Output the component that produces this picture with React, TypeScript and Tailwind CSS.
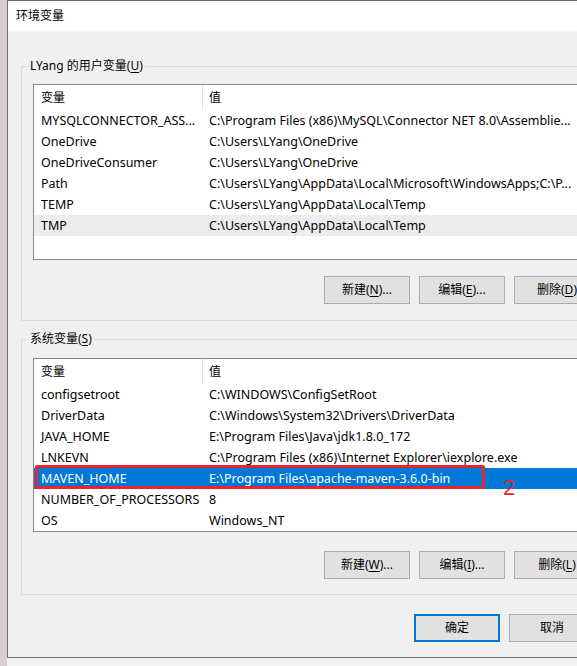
import type { ReactNode } from "react";

const userVars: [string, string][] = [
  ["MYSQLCONNECTOR_ASS...", "C:\\Program Files (x86)\\MySQL\\Connector NET 8.0\\Assemblie..."],
  ["OneDrive", "C:\\Users\\LYang\\OneDrive"],
  ["OneDriveConsumer", "C:\\Users\\LYang\\OneDrive"],
  ["Path", "C:\\Users\\LYang\\AppData\\Local\\Microsoft\\WindowsApps;C:\\P..."],
  ["TEMP", "C:\\Users\\LYang\\AppData\\Local\\Temp"],
  ["TMP", "C:\\Users\\LYang\\AppData\\Local\\Temp"],
];

const systemVars: [string, string][] = [
  ["configsetroot", "C:\\WINDOWS\\ConfigSetRoot"],
  ["DriverData", "C:\\Windows\\System32\\Drivers\\DriverData"],
  ["JAVA_HOME", "E:\\Program Files\\Java\\jdk1.8.0_172"],
  ["LNKEVN", "C:\\Program Files (x86)\\Internet Explorer\\iexplore.exe"],
  ["MAVEN_HOME", "E:\\Program Files\\apache-maven-3.6.0-bin"],
  ["NUMBER_OF_PROCESSORS", "8"],
  ["OS", "Windows_NT"],
];

const Mn = ({ children }: { children: ReactNode }) => (
  <span className="underline underline-offset-[2px]">{children}</span>
);

const WinButton = ({ children, primary }: { children: ReactNode; primary?: boolean }) => (
  <button
    className={
      primary
        ? "h-[28px] w-[86px] shrink-0 border-2 border-[#0078d7] bg-[#e1e1e1] text-[12px]"
        : "h-[28px] w-[86px] shrink-0 border border-[#adadad] bg-[#e1e1e1] text-[12px]"
    }
  >
    {children}
  </button>
);

interface VarListProps {
  rows: [string, string][];
  height: string;
  greyRow?: number;
  selectedRow?: number;
}

const VarList = ({ rows, height, greyRow, selectedRow }: VarListProps) => (
  <div className={`flex flex-col border border-[#828790] bg-white ${height}`}>
    {/* Header */}
    <div className="flex h-[25px] shrink-0 items-center">
      <div className="flex h-full w-[169px] shrink-0 items-center border-r border-[#e5e5e5] pl-[7px]">
        变量
      </div>
      <div className="pl-[6px]">值</div>
    </div>

    {rows.map(([name, value], i) => (
      <div
        key={name}
        className={
          i === selectedRow
            ? "relative flex h-[21px] shrink-0 items-center bg-[#0078d7] text-[12.5px] text-white"
            : i === greyRow
              ? "relative flex h-[21px] shrink-0 items-center bg-[#ececec] text-[12.5px]"
              : "relative flex h-[21px] shrink-0 items-center text-[12.5px]"
        }
      >
        <div className="w-[169px] shrink-0 whitespace-nowrap pl-[7px]">{name}</div>
        <div className="whitespace-nowrap pl-[6px]">{value}</div>

        {i === selectedRow && (
          <>
            <div className="absolute -top-[3px] left-[1px] h-[24px] w-[450px] rounded-[2px] border-[3px] border-[#e5262c]" />
            <span className="absolute left-[469px] top-[9px] font-['Liberation_Sans',sans-serif] text-[22px] leading-[22px] text-[#e5262c]">
              2
            </span>
          </>
        )}
      </div>
    ))}
  </div>
);

const Group = ({ label, children }: { label: ReactNode; children: ReactNode }) => (
  <div className="relative ml-[13px] w-[591px] border border-[#dcdcdc] px-[11px]">
    <span className="absolute -top-[9px] left-[6px] bg-[#f0f0f0] px-[2px] leading-[16px]">
      {label}
    </span>
    {children}
  </div>
);

export default function App() {
  return (
    <div className="flex h-[666px] w-[577px] overflow-hidden bg-[#f3f3f3] font-['Noto_Sans','Noto_Sans_CJK_SC',sans-serif] text-[12px] leading-[16px] text-black">
      {/* Desktop behind the window */}
      <div className="w-[7px] shrink-0 bg-[#d8d0d0]" />

      <div className="flex w-[616px] shrink-0 flex-col">
        {/* Dialog window */}
        <div className="flex h-[658px] shrink-0 flex-col border-y border-l border-[#707070] bg-[#f0f0f0]">
          {/* Title bar */}
          <div className="flex h-[30px] shrink-0 items-center bg-white pl-[8px]">环境变量</div>

          {/* User variables */}
          <div className="mt-[35px]">
            <Group
              label={
                <>
                  LYang 的用户变量(<Mn>U</Mn>)
                </>
              }
            >
              <div className="pb-[16px] pt-[17px]">
                <VarList rows={userVars} height="h-[176px]" greyRow={5} />
                <div className="mt-[16px] flex justify-end gap-[9px]">
                  <WinButton>
                    新建(<Mn>N</Mn>)...
                  </WinButton>
                  <WinButton>
                    编辑(<Mn>E</Mn>)...
                  </WinButton>
                  <WinButton>
                    删除(<Mn>D</Mn>)
                  </WinButton>
                </div>
              </div>
            </Group>
          </div>

          {/* System variables */}
          <div className="mt-[18px]">
            <Group
              label={
                <>
                  系统变量(<Mn>S</Mn>)
                </>
              }
            >
              <div className="pb-[15px] pt-[18px]">
                <VarList rows={systemVars} height="h-[174px]" selectedRow={4} />
                <div className="mt-[19px] flex justify-end gap-[9px]">
                  <WinButton>
                    新建(<Mn>W</Mn>)...
                  </WinButton>
                  <WinButton>
                    编辑(<Mn>I</Mn>)...
                  </WinButton>
                  <WinButton>
                    删除(<Mn>L</Mn>)
                  </WinButton>
                </div>
              </div>
            </Group>
          </div>

          {/* Dialog buttons */}
          <div className="ml-[13px] mt-[19px] flex w-[591px] justify-end gap-[9px] pr-[17px]">
            <WinButton primary>确定</WinButton>
            <WinButton>取消</WinButton>
          </div>
        </div>
      </div>
    </div>
  );
}
